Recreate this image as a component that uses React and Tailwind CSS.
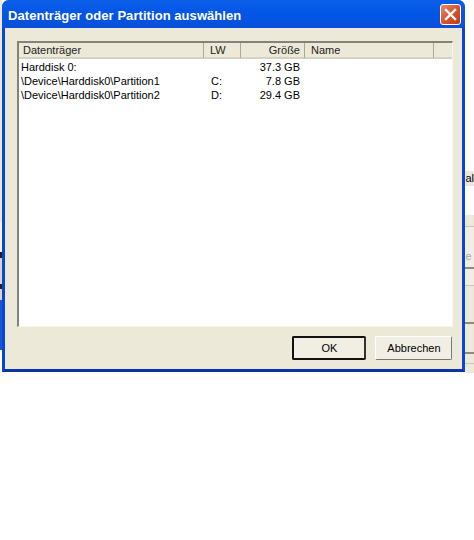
const font = "font-['Liberation_Sans',sans-serif]";

const columns = [
  { label: "Datenträger", width: "w-[185px]", align: "text-left pl-[4px]" },
  { label: "LW", width: "w-[37px]", align: "text-left pl-[6px]" },
  { label: "Größe", width: "w-[64px]", align: "text-right pr-[4px]" },
  { label: "Name", width: "w-[129px]", align: "text-left pl-[6px]" },
];

const rows = [
  { name: "Harddisk 0:", drive: "", size: "37.3 GB" },
  { name: "\\Device\\Harddisk0\\Partition1", drive: "C:", size: "7.8 GB" },
  { name: "\\Device\\Harddisk0\\Partition2", drive: "D:", size: "29.4 GB" },
];

function CloseButton() {
  return (
    <button className="flex h-[21px] w-[21px] items-center justify-center rounded-[3px] border border-white bg-gradient-to-br from-[#e58a6c] via-[#d9532c] to-[#bf3a18]">
      <svg width="13" height="13" viewBox="0 0 13 13">
        <path d="M2 2 L11 11 M11 2 L2 11" stroke="#fff" strokeWidth="2.4" strokeLinecap="square" />
      </svg>
    </button>
  );
}

function LeftStrip() {
  return (
    <div className="flex w-[2px] flex-col">
      <div className="h-[222px] bg-[#ece9d8]" />
      <div className="h-[30px] bg-[#f5f3ea]" />
      <div className="h-[6px] bg-[#222]" />
      <div className="h-[26px] bg-[#d8d6c8]" />
      <div className="h-[5px] bg-[#222]" />
      <div className="h-[11px] bg-[#d8d6c8]" />
      <div className="h-[50px] bg-[#1d55d8]" />
    </div>
  );
}

function RightStrip() {
  return (
    <div className="flex flex-1 flex-col text-[11px] leading-[13px] text-black">
      <div className="h-[171px] bg-white" />
      <div className="h-[15px] bg-[#ece9d8] pt-[1px]">al</div>
      <div className="h-[29px] bg-white" />
      <div className="h-[11px] bg-[#ece9d8]" />
      <div className="h-[41px] border-t border-[#c9c6b6] bg-[#f1efe4] pt-[23px] text-[#a9a9a9]">e</div>
      <div className="h-[18px] border-t-2 border-[#8d8a7e] bg-[#f1efe4]" />
      <div className="h-[37px] border-t border-[#c9c6b6] bg-[#ece9d8]" />
      <div className="h-[30px] border-t-2 border-[#8d8a7e] bg-[#ece9d8]" />
      <div className="h-[11px] border-t-2 border-[#8d8a7e] bg-[#ece9d8]" />
      <div className="h-[10px] border-t border-[#c9c6b6] bg-[#ece9d8]" />
    </div>
  );
}

export default function App() {
  return (
    <div className={`h-[540px] w-[474px] overflow-hidden bg-white ${font} text-[11px] leading-[14px] text-black`}>
      <div className="flex h-[373px]">
        <LeftStrip />
        <div className="flex h-[372px] w-[464px] flex-col rounded-t-[7px] border-x-[3px] border-b-[3px] border-x-[#0b45d4] border-b-[#0a33a8] bg-[#ece9d8]">
          <div className="-mx-[3px] flex h-[28px] items-center justify-between rounded-t-[7px] bg-gradient-to-b from-[#0a5fe8] via-[#0355e6] to-[#0a4fd8] pl-[6px] pr-[4px]">
            <span className="pt-[3px] text-[13px] font-bold tracking-[0.06px] text-white">Datenträger oder Partition auswählen</span>
            <CloseButton />
          </div>

          <div className="flex flex-1 flex-col pl-[12px] pr-[9px] pt-[13px] pb-[9px]">
            <div className="flex flex-1 flex-col border-l-2 border-t-2 border-r border-b border-l-[#84827a] border-t-[#84827a] border-r-[#f7f6f0] border-b-[#f7f6f0] bg-white">
              <div className="flex h-[16px] bg-[#ece9d8]">
                {columns.map((col) => (
                  <div key={col.label} className={`${col.width} ${col.align} border-r border-r-[#aca899] border-b-2 border-b-[#d6d2c2] text-[#222]`}>
                    {col.label}
                  </div>
                ))}
                <div className="flex-1 border-b-2 border-b-[#d6d2c2]" />
              </div>
              <div className="pt-[1px]">
                {rows.map((row) => (
                  <div key={row.name} className="flex h-[14px]">
                    <div className="w-[187px] pl-[2px]">{row.name}</div>
                    <div className="w-[36px] pl-[5px]">{row.drive}</div>
                    <div className="w-[58px] text-right">{row.size}</div>
                  </div>
                ))}
              </div>
            </div>

            <div className="mt-[9px] flex justify-end gap-[9px] pr-[1px]">
              <button className="h-[24px] w-[74px] rounded-[2px] border-2 border-[#111] border-r-[#333] bg-[#f1efe4] text-center">OK</button>
              <button className="h-[24px] w-[77px] rounded-[2px] border border-white border-r-[#777] border-b-[#777] bg-[#f1efe4] text-center">Abbrechen</button>
            </div>
          </div>
        </div>
        <RightStrip />
      </div>
    </div>
  );
}
